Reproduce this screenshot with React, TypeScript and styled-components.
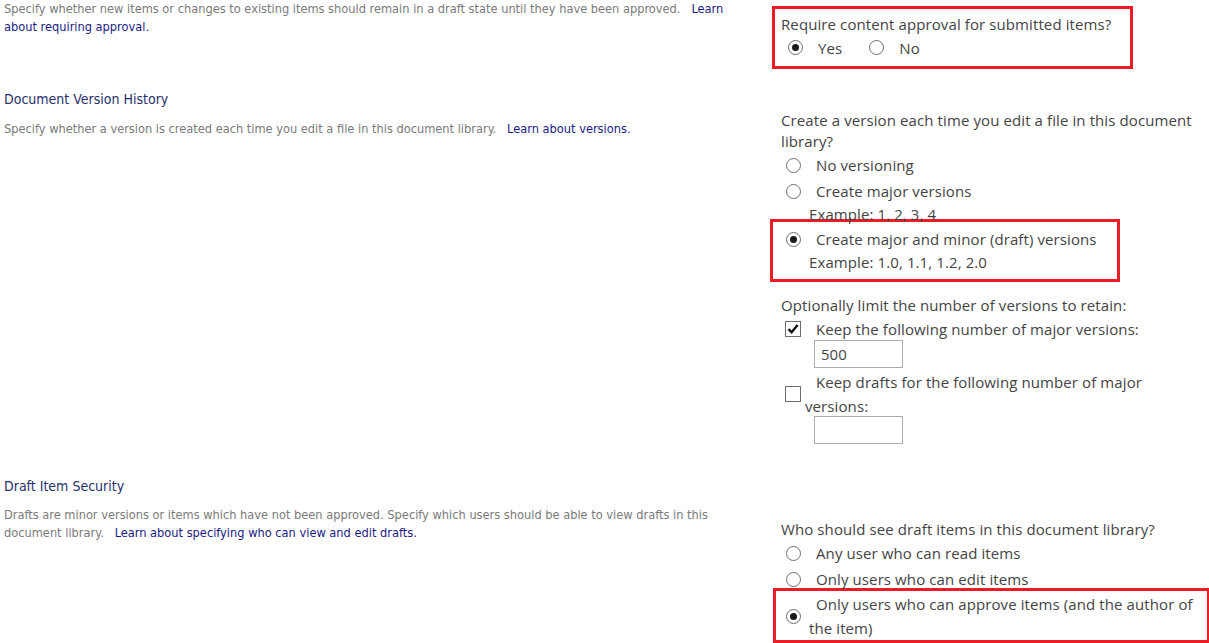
import styled, { createGlobalStyle } from "styled-components";

const GlobalStyle = createGlobalStyle`
  body {
    margin: 0;
    background: #ffffff;
    font-family: "Open Sans", "Noto Sans", sans-serif;
  }
`;

interface OptionProps {
  kind: "radio" | "checkbox";
  checked?: boolean;
  label: string;
}

const Option = ({ kind, checked, label }: OptionProps) => (
  <StyledOptionRow>
    {kind === "radio" ? (
      <StyledRadio $checked={!!checked} />
    ) : (
      <StyledCheckbox>
        {checked && (
          <svg width="14" height="14" viewBox="0 0 14 14">
            <path d="M2.5 7.2 L5.6 10.3 L11.6 3" fill="none" stroke="#111" strokeWidth="2.4" />
          </svg>
        )}
      </StyledCheckbox>
    )}
    <StyledOptionLabel $kind={kind}>{label}</StyledOptionLabel>
  </StyledOptionRow>
);

const App = () => {
  return (
    <>
      <GlobalStyle />
      <StyledPage>
        <StyledSection>
          <StyledInfo>
            <StyledDesc>
              Specify whether new items or changes to existing items should remain in a draft state until they have
              been approved. &nbsp; <StyledLink>Learn about requiring approval.</StyledLink>
            </StyledDesc>
          </StyledInfo>
          <StyledControls $pad={0}>
            <StyledHighlight $top={6} $left={-9} $width={361} $padTop={5} $padBottom={8}>
              <StyledQuestion>Require content approval for submitted items?</StyledQuestion>
              <StyledInlineChoices>
                <StyledChoice>
                  <StyledRadio $checked />
                  <span>Yes</span>
                </StyledChoice>
                <StyledChoice>
                  <StyledRadio $checked={false} />
                  <span>No</span>
                </StyledChoice>
              </StyledInlineChoices>
            </StyledHighlight>
          </StyledControls>
        </StyledSection>

        <StyledSection $gap={20}>
          <StyledInfo>
            <StyledTitle>Document Version History</StyledTitle>
            <StyledDesc $top={11}>
              Specify whether a version is created each time you edit a file in this document library. &nbsp;{" "}
              <StyledLink>Learn about versions.</StyledLink>
            </StyledDesc>
          </StyledInfo>
          <StyledControls $pad={21}>
            <StyledQuestion>Create a version each time you edit a file in this document library?</StyledQuestion>
            <Option kind="radio" label="No versioning" />
            <Option kind="radio" label="Create major versions" />
            <StyledExample>Example: 1, 2, 3, 4</StyledExample>
            <StyledHighlight $top={-6} $left={-11} $width={350} $padTop={4} $padBottom={6}>
              <Option kind="radio" checked label="Create major and minor (draft) versions" />
              <StyledExample>Example: 1.0, 1.1, 1.2, 2.0</StyledExample>
            </StyledHighlight>
            <StyledQuestion $top={13}>Optionally limit the number of versions to retain:</StyledQuestion>
            <Option kind="checkbox" checked label="Keep the following number of major versions:" />
            <StyledNumberInput defaultValue="500" />
            <Option kind="checkbox" label="Keep drafts for the following number of major versions:" />
            <StyledNumberInput defaultValue="" />
          </StyledControls>
        </StyledSection>

        <StyledSection $gap={30}>
          <StyledInfo>
            <StyledTitle>Draft Item Security</StyledTitle>
            <StyledDesc $top={10}>
              Drafts are minor versions or items which have not been approved. Specify which users should be able to
              view drafts in this document library. &nbsp;{" "}
              <StyledLink>Learn about specifying who can view and edit drafts.</StyledLink>
            </StyledDesc>
          </StyledInfo>
          <StyledControls $pad={43}>
            <StyledQuestion>Who should see draft items in this document library?</StyledQuestion>
            <Option kind="radio" label="Any user who can read items" />
            <Option kind="radio" label="Only users who can edit items" />
            <StyledHighlight $top={-4} $left={-8} $width={437} $padTop={1} $padBottom={0}>
              <Option kind="radio" checked label="Only users who can approve items (and the author of the item)" />
            </StyledHighlight>
          </StyledControls>
        </StyledSection>
      </StyledPage>
    </>
  );
};

export default App;

// ========== Start styled-components =========
const StyledPage = styled.div`
  width: 1209px;
  height: 643px;
  overflow: hidden;
`;
const StyledSection = styled.section<{ $gap?: number }>`
  display: grid;
  grid-template-columns: 781px 1fr;
  margin-top: ${({ $gap }) => $gap ?? 0}px;
`;
const StyledInfo = styled.div`
  padding-left: 4px;
  padding-right: 40px;
`;
const StyledTitle = styled.h3`
  margin: 0;
  font-family: "Liberation Sans Narrow", "DejaVu Sans Condensed", "Roboto", sans-serif;
  font-weight: normal;
  font-size: 14px;
  line-height: 20px;
  color: #262f6b;
`;
const StyledDesc = styled.p<{ $top?: number }>`
  margin: ${({ $top }) => $top ?? 0}px 0 0;
  font-family: "Liberation Sans Narrow", "DejaVu Sans Condensed", "Roboto", sans-serif;
  font-size: 12.7px;
  line-height: 18px;
  color: #7a7a7a;
`;
const StyledLink = styled.a`
  color: #1b1b85;
  cursor: pointer;
`;
const StyledControls = styled.div<{ $pad: number }>`
  padding-top: ${({ $pad }) => $pad}px;
  color: #444444;
  font-size: 15px;
  letter-spacing: 0.1px;
  width: 420px;
`;
const StyledQuestion = styled.div<{ $top?: number }>`
  margin-top: ${({ $top }) => $top ?? 0}px;
  line-height: 21px;
`;
const StyledHighlight = styled.div<{
  $top: number;
  $left: number;
  $width: number;
  $padTop: number;
  $padBottom: number;
}>`
  box-sizing: border-box;
  margin: ${({ $top }) => $top}px 0 0 ${({ $left }) => $left}px;
  width: ${({ $width }) => $width}px;
  padding: ${({ $padTop }) => $padTop}px 0 ${({ $padBottom }) => $padBottom}px ${({ $left }) => -$left - 3}px;
  border: 3px solid #ed1c24;
`;
const StyledInlineChoices = styled.div`
  display: flex;
  align-items: center;
  height: 21px;
  margin-top: 2px;
  padding-left: 5px;
`;
const StyledChoice = styled.label`
  display: flex;
  align-items: center;
  gap: 15px;
  margin-right: 25px;
`;
const StyledOptionRow = styled.div`
  display: flex;
  align-items: center;
  min-height: 26px;
  padding-left: 3px;
`;
const StyledRadio = styled.span<{ $checked: boolean }>`
  box-sizing: border-box;
  flex: none;
  position: relative;
  width: 15px;
  height: 15px;
  margin-left: 2px;
  border: 1px solid #6f6f6f;
  border-radius: 50%;
  background: #fff;

  &::after {
    content: "";
    display: ${({ $checked }) => ($checked ? "block" : "none")};
    position: absolute;
    left: 3px;
    top: 3px;
    width: 7px;
    height: 7px;
    border-radius: 50%;
    background: #1a1a1a;
  }
`;
const StyledCheckbox = styled.span`
  box-sizing: border-box;
  flex: none;
  display: flex;
  align-items: center;
  justify-content: center;
  width: 16px;
  height: 16px;
  margin-left: 1px;
  border: 1px solid #6f6f6f;
  background: #fff;
`;
const StyledOptionLabel = styled.span<{ $kind: "radio" | "checkbox" }>`
  margin-left: ${({ $kind }) => ($kind === "radio" ? 8 : 4)}px;
  text-indent: ${({ $kind }) => ($kind === "radio" ? 7 : 11)}px;
  line-height: 24px;
`;
const StyledExample = styled.div`
  padding-left: 28px;
  line-height: 21px;
`;
const StyledNumberInput = styled.input`
  box-sizing: border-box;
  display: block;
  width: 89px;
  height: 28px;
  margin: -2px 0 2px 33px;
  padding: 0 6px;
  border: 1px solid #ababab;
  font-family: inherit;
  font-size: 15px;
  color: #444444;
  outline: none;
`;
// ========== End styled-components =========
